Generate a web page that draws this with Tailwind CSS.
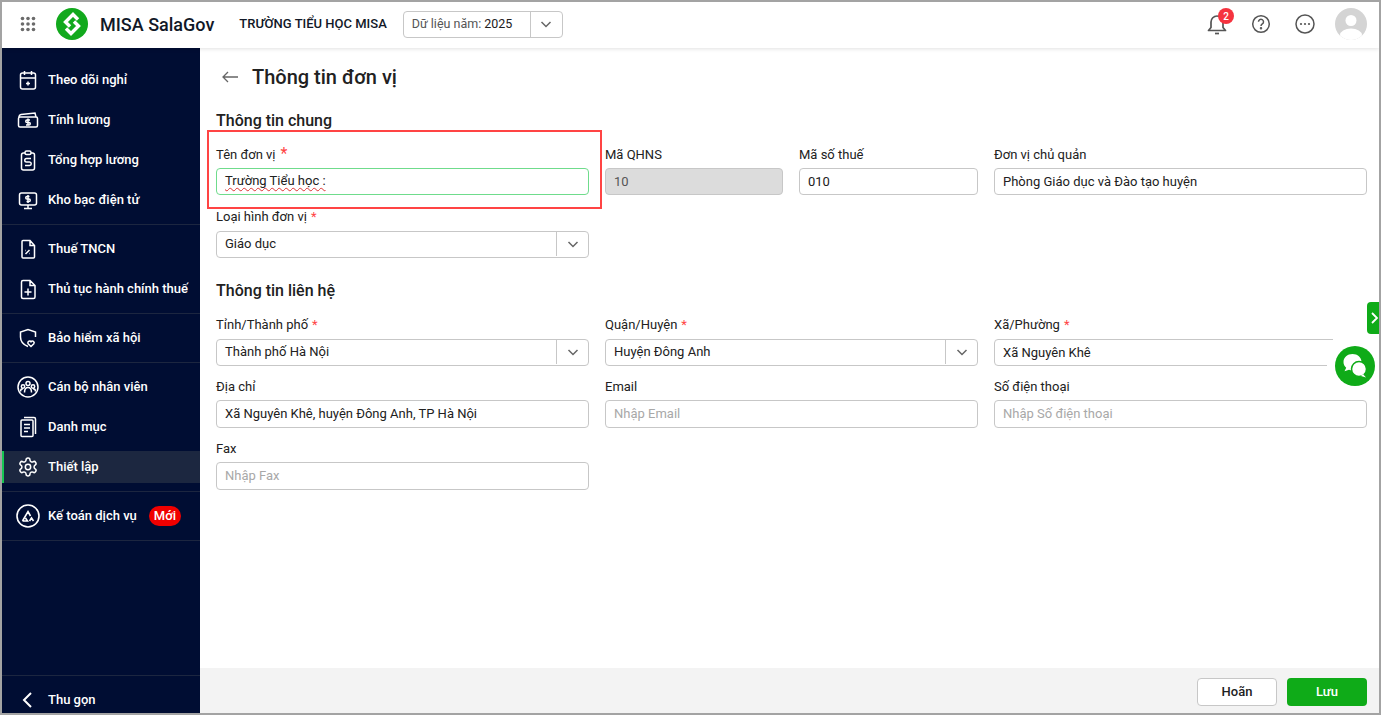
<!DOCTYPE html>
<html lang="vi">

<head>
    <meta charset="UTF-8" />
    <title>Thông tin đơn vị</title>
    <script src="https://cdn.jsdelivr.net/npm/@tailwindcss/browser@4"></script>
</head>

<body class="bg-white font-['Roboto',sans-serif] text-[13px] text-[#212121]">
    <div class="relative flex h-[715px] w-[1381px] flex-col overflow-hidden border-2 border-[#a3a3a3]">

        <!-- Top bar -->
        <header class="relative z-10 flex h-[46px] shrink-0 items-center bg-white pb-[2px] shadow-[0_1px_4px_rgba(0,0,0,0.12)]">
            <svg class="ml-[18px] h-4 w-4 text-[#6b6b6b]" viewBox="0 0 16 16" fill="currentColor">
                <circle cx="2.5" cy="2.5" r="1.8" /><circle cx="8" cy="2.5" r="1.8" /><circle cx="13.5" cy="2.5" r="1.8" />
                <circle cx="2.5" cy="8" r="1.8" /><circle cx="8" cy="8" r="1.8" /><circle cx="13.5" cy="8" r="1.8" />
                <circle cx="2.5" cy="13.5" r="1.8" /><circle cx="8" cy="13.5" r="1.8" /><circle cx="13.5" cy="13.5" r="1.8" />
            </svg>
            <svg class="ml-[20px] h-8 w-8" viewBox="0 0 32 32">
                <circle cx="16" cy="16" r="16" fill="#12a91d" />
                <g fill="none" stroke="#fff" stroke-width="3.4">
                    <path d="M22 11.5 17 6.5 9.5 14 14 18.5" />
                    <path d="M10 20.5 15 25.5 22.5 18 18 13.5" />
                </g>
            </svg>
            <span class="ml-3 text-[18px] font-medium text-[#111827]">MISA SalaGov</span>
            <span class="ml-[25px] text-[13px] font-medium text-[#111827]">TRƯỜNG TIỂU HỌC MISA</span>
            <div class="ml-4 flex h-[27px] w-[160px] items-center rounded-[4px] border border-[#c7c7c7]">
                <span class="flex-1 pl-2 text-[12.5px] text-[#555]">Dữ liệu năm: <span class="text-[#212121]">2025</span></span>
                <span class="flex h-full w-[32px] items-center justify-center border-l border-[#c7c7c7]">
                    <svg class="h-4 w-4 text-[#666]" viewBox="0 0 16 16" fill="none" stroke="currentColor" stroke-width="1.5"><path d="m3.5 6 4.5 4.5L12.5 6" /></svg>
                </span>
            </div>

            <div class="ml-auto flex items-center">
                <div class="relative">
                    <svg class="h-6 w-6 text-[#555]" viewBox="0 0 24 24" fill="none" stroke="currentColor" stroke-width="1.7">
                        <path d="M3.5 18.5h17l-2.500-3V10a6 6 0 0 0-12 0v5.500z" stroke-linejoin="round" />
                        <path d="M10 21.5h4" />
                    </svg>
                    <span class="absolute -top-[4px] left-[13px] flex h-4 w-4 items-center justify-center rounded-full bg-[#f5333f] text-[10px] font-medium text-white">2</span>
                </div>
                <svg class="ml-[22px] h-[20px] w-[20px] text-[#555]" viewBox="0 0 20 20" fill="none" stroke="currentColor" stroke-width="1.5">
                    <circle cx="10" cy="10" r="8.3" />
                    <path d="M7.5 7.8a2.500 2.500 0 1 1 3.800 2.100c-.9.600-1.300 1-1.300 2" />
                    <circle cx="10" cy="14.3" r=".5" fill="currentColor" />
                </svg>
                <svg class="ml-[24px] h-[20px] w-[20px] text-[#555]" viewBox="0 0 20 20" fill="none" stroke="currentColor" stroke-width="1.5">
                    <circle cx="10" cy="10" r="9" />
                    <g fill="currentColor" stroke="none"><circle cx="6" cy="10" r="1.1" /><circle cx="10" cy="10" r="1.1" /><circle cx="14" cy="10" r="1.1" /></g>
                </svg>
                <svg class="ml-[20px] mr-[12px] h-8 w-8" viewBox="0 0 32 32">
                    <clipPath id="avatar"><circle cx="16" cy="16" r="16" /></clipPath>
                    <g clip-path="url(#avatar)">
                        <rect width="32" height="32" fill="#d4d4d4" />
                        <circle cx="16" cy="12.5" r="5.5" fill="#fff" />
                        <ellipse cx="16" cy="27" rx="11" ry="6.5" fill="#fff" />
                    </g>
                </svg>
            </div>
        </header>

        <div class="flex min-h-0 flex-1">
            <!-- Sidebar -->
            <aside class="flex w-[198px] shrink-0 flex-col bg-[#000d33] text-[13px] font-medium text-white">
                <div class="border-b border-[#1c2640] pt-[12px] pb-[4px]">
                    <a class="flex h-[40px] items-center gap-2 pl-[14px]">
                        <svg class="h-6 w-6" viewBox="0 0 24 24" fill="none" stroke="currentColor" stroke-width="1.5"><rect x="4.5" y="5" width="15" height="16" rx="2" /><path d="M4.500 10h15M8.500 3v4M15.500 3v4M12 13.500v4M10 15.500h4" /></svg>
                        Theo dõi nghỉ
                    </a>
                    <a class="flex h-[40px] items-center gap-2 pl-[14px]">
                        <svg class="h-6 w-6" viewBox="0 0 24 24" fill="none" stroke="currentColor" stroke-width="1.5"><rect x="2.5" y="9" width="19" height="10" rx="1.5" /><path d="M3 9c0-1.500 1-2.300 2-2.500L19 5l1 4M12 10.500v7M14 12h-3a1 1 0 0 0 0 2.500h2a1 1 0 0 1 0 2.500h-3" /></svg>
                        Tính lương
                    </a>
                    <a class="flex h-[40px] items-center gap-2 pl-[14px]">
                        <svg class="h-6 w-6" viewBox="0 0 24 24" fill="none" stroke="currentColor" stroke-width="1.5"><rect x="5.5" y="5" width="13" height="17" rx="2" /><rect x="9" y="3" width="6" height="3.5" rx="1.5" fill="#000d33" /><path d="M15 10.500h-4.500a1.500 1.500 0 0 0 0 3.500h3a1.500 1.500 0 0 1 0 3.500H9" /></svg>
                        Tổng hợp lương
                    </a>
                    <a class="flex h-[40px] items-center gap-2 pl-[14px]">
                        <svg class="h-6 w-6" viewBox="0 0 24 24" fill="none" stroke="currentColor" stroke-width="1.5"><rect x="3.5" y="5" width="17" height="12" rx="2" /><path d="M12 17v3.500M8 20.500h8M12 7v8M13.500 8.500H11a1 1 0 0 0 0 2.500h2a1 1 0 0 1 0 2.500h-2.500" /></svg>
                        Kho bạc điện tử
                    </a>
                </div>
                <div class="border-b border-[#1c2640] py-[4px]">
                    <a class="flex h-[40px] items-center gap-2 pl-[14px]">
                        <svg class="h-6 w-6" viewBox="0 0 24 24" fill="none" stroke="currentColor" stroke-width="1.5"><path d="M7 3.500h7l4.500 5V20a1 1 0 0 1-1 1H7a1 1 0 0 1-1-1V4.500a1 1 0 0 1 1-1zM14 3.500V8.500h4.500M9.500 17l4-4M9.500 13.500h.5M13 16.500h.5" /></svg>
                        Thuế TNCN
                    </a>
                    <a class="flex h-[40px] items-center gap-2 pl-[14px]">
                        <svg class="h-6 w-6" viewBox="0 0 24 24" fill="none" stroke="currentColor" stroke-width="1.5"><path d="M7 3.500h7l5 5V20a1.500 1.500 0 0 1-1.500 1.500H7A1.500 1.500 0 0 1 5.500 20V5A1.500 1.500 0 0 1 7 3.500zM14 3.500v5h5M12 11.500v7M8.500 15h7" /></svg>
                        Thủ tục hành chính thuế
                    </a>
                </div>
                <div class="border-b border-[#1c2640] py-[4px]">
                    <a class="flex h-[40px] items-center gap-2 pl-[14px]">
                        <svg class="h-6 w-6" viewBox="0 0 24 24" fill="none" stroke="currentColor" stroke-width="1.5"><path d="M12 20.500c-4-1.500-7.500-4.500-7.500-9.500V6l7.500-2.500L19.500 6v5M15 20.500l-2.800-2.700a1.700 1.700 0 0 1 2.800-2 1.700 1.700 0 0 1 2.800 2z" /></svg>
                        Bảo hiểm xã hội
                    </a>
                </div>
                <div class="border-b border-[#1c2640] py-[4px]">
                    <a class="flex h-[40px] items-center gap-2 pl-[14px]">
                        <svg class="h-6 w-6" viewBox="0 0 24 24" fill="none" stroke="currentColor" stroke-width="1.5"><circle cx="12" cy="12" r="10" /><circle cx="12" cy="8.500" r="2" /><circle cx="7" cy="11.500" r="1.700" /><circle cx="17" cy="11.500" r="1.700" /><path d="M8.500 17.500c0-3 1.500-5 3.500-5s3.500 2 3.500 5M4.500 16.500c0-1.500 1-2.700 2.500-2.700M19.500 16.500c0-1.500-1-2.700-2.500-2.700" /></svg>
                        Cán bộ nhân viên
                    </a>
                    <a class="flex h-[40px] items-center gap-2 pl-[14px]">
                        <svg class="h-6 w-6" viewBox="0 0 24 24" fill="none" stroke="currentColor" stroke-width="1.5"><rect x="5" y="5" width="12" height="16.5" rx="1" /><path d="M8 2.500h10a1.500 1.500 0 0 1 1.500 1.500v15M8 9.500h6M8 13h6M8 16.500h4" /></svg>
                        Danh mục
                    </a>
                    <a class="my-[4px] flex h-[32px] items-center gap-2 border-l-2 border-[#17c653] bg-[#1c2740] pl-[12px]">
                        <svg class="h-6 w-6" viewBox="-1.5 -1.5 27 27" fill="none" stroke="currentColor" stroke-width="1.7"><circle cx="12" cy="12" r="3" /><path d="M12.220 2h-.44a2 2 0 0 0-2 2v.18a2 2 0 0 1-1 1.730l-.43.250a2 2 0 0 1-2 0l-.15-.08a2 2 0 0 0-2.730.730l-.22.380a2 2 0 0 0 .730 2.730l.15.1a2 2 0 0 1 1 1.720v.51a2 2 0 0 1-1 1.740l-.15.09a2 2 0 0 0-.730 2.730l.22.380a2 2 0 0 0 2.730.730l.15-.08a2 2 0 0 1 2 0l.43.250a2 2 0 0 1 1 1.730V20a2 2 0 0 0 2 2h.44a2 2 0 0 0 2-2v-.18a2 2 0 0 1 1-1.730l.43-.250a2 2 0 0 1 2 0l.15.08a2 2 0 0 0 2.730-.730l.22-.39a2 2 0 0 0-.730-2.730l-.15-.08a2 2 0 0 1-1-1.740v-.5a2 2 0 0 1 1-1.740l.15-.09a2 2 0 0 0 .730-2.730l-.22-.380a2 2 0 0 0-2.730-.730l-.15.08a2 2 0 0 1-2 0l-.43-.250a2 2 0 0 1-1-1.730V4a2 2 0 0 0-2-2z" /></svg>
                        Thiết lập
                    </a>
                </div>
                <div class="border-b border-[#1c2640] py-[4px]">
                    <a class="flex h-[40px] items-center gap-2 pl-[14px]">
                        <svg class="h-6 w-6" viewBox="0 0 24 24" fill="none" stroke="currentColor" stroke-width="1.6"><circle cx="12" cy="12" r="11" /><path d="M6.500 17h5L9.500 14M6.500 17 12 7.500l2.500 4.500M13.500 17l2-3 2 3" /></svg>
                        Kế toán dịch vụ
                        <span class="ml-[4px] flex h-[20px] items-center rounded-full bg-[#f00000] px-[5px] text-[13px] font-medium">Mới</span>
                    </a>
                </div>
                <div class="mt-auto flex h-[38px] items-center gap-2 border-t border-[#1c2640] pt-[10px] pl-[14px]">
                    <svg class="h-6 w-6" viewBox="0 0 24 24" fill="none" stroke="currentColor" stroke-width="2"><path d="m15 5-7 7 7 7" /></svg>
                    Thu gọn
                </div>
            </aside>

            <!-- Content -->
            <main class="flex min-w-0 flex-1 flex-col">
                <div class="flex-1 pt-[12px] pr-[12px] pl-[16px]">
                    <div class="flex h-[34px] items-center">
                        <svg class="ml-[5px] h-[18px] w-[18px] text-[#666]" viewBox="0 0 18 18" fill="none" stroke="currentColor" stroke-width="1.3"><path d="M17 9H2M7 4 2 9l5 5" /></svg>
                        <h1 class="ml-[13px] text-[20px] font-medium text-[#212121]">Thông tin đơn vị</h1>
                    </div>

                    <h2 class="mt-[17px] h-[20px] text-[16px] leading-[20px] font-medium">Thông tin chung</h2>
                    <div class="mt-4 grid grid-cols-3 gap-x-4 gap-y-[14px]">
                        <div>
                            <label class="flex h-[16px] items-center">Tên đơn vị <span class="ml-[5px] -translate-y-[1px] text-[16px] text-[#f44]">*</span></label>
                            <div class="mt-[5px] flex h-[27px] items-center rounded-[4px] border border-[#6fdc8c] px-2 pb-px">
                                <span class="underline decoration-[#d33] decoration-wavy decoration-1 underline-offset-2">Trường Tiểu học :</span>
                            </div>
                        </div>
                        <div class="grid grid-cols-[178px_179px] gap-x-4">
                            <div>
                                <label class="flex h-[16px] items-center">Mã QHNS</label>
                                <input class="mt-[5px] h-[27px] w-full rounded-[4px] border border-[#c7c7c7] bg-[#dcdcdc] px-2 pb-px text-[#555]" value="10" disabled />
                            </div>
                            <div>
                                <label class="flex h-[16px] items-center">Mã số thuế</label>
                                <input class="mt-[5px] h-[27px] w-full rounded-[4px] border border-[#c7c7c7] px-2 pb-px" value="010" />
                            </div>
                        </div>
                        <div>
                            <label class="flex h-[16px] items-center">Đơn vị chủ quản</label>
                            <input class="mt-[5px] h-[27px] w-full rounded-[4px] border border-[#c7c7c7] px-2 pb-px" value="Phòng Giáo dục và Đào tạo huyện" />
                        </div>
                        <div>
                            <label class="flex h-[16px] items-center">Loại hình đơn vị <span class="ml-1 text-[#f44]">*</span></label>
                            <div class="mt-[6px] flex h-[27px] items-center rounded-[4px] border border-[#c7c7c7] pb-px">
                                <span class="flex-1 px-2">Giáo dục</span>
                                <span class="flex h-full w-[32px] items-center justify-center border-l border-[#c7c7c7]">
                                    <svg class="h-4 w-4 text-[#666]" viewBox="0 0 16 16" fill="none" stroke="currentColor" stroke-width="1.5"><path d="m3.5 6 4.5 4.5L12.5 6" /></svg>
                                </span>
                            </div>
                        </div>
                    </div>

                    <h2 class="mt-[23px] h-[20px] text-[16px] leading-[20px] font-medium">Thông tin liên hệ</h2>
                    <div class="mt-4 grid grid-cols-3 gap-x-4 gap-y-[13px]">
                        <div>
                            <label class="flex h-[16px] items-center">Tỉnh/Thành phố <span class="ml-1 text-[#f44]">*</span></label>
                            <div class="mt-[6px] flex h-[27px] items-center rounded-[4px] border border-[#c7c7c7] pb-px">
                                <span class="flex-1 px-2">Thành phố Hà Nội</span>
                                <span class="flex h-full w-[32px] items-center justify-center border-l border-[#c7c7c7]">
                                    <svg class="h-4 w-4 text-[#666]" viewBox="0 0 16 16" fill="none" stroke="currentColor" stroke-width="1.5"><path d="m3.5 6 4.5 4.5L12.5 6" /></svg>
                                </span>
                            </div>
                        </div>
                        <div>
                            <label class="flex h-[16px] items-center">Quận/Huyện <span class="ml-1 text-[#f44]">*</span></label>
                            <div class="mt-[6px] flex h-[27px] items-center rounded-[4px] border border-[#c7c7c7] pb-px">
                                <span class="flex-1 px-2">Huyện Đông Anh</span>
                                <span class="flex h-full w-[32px] items-center justify-center border-l border-[#c7c7c7]">
                                    <svg class="h-4 w-4 text-[#666]" viewBox="0 0 16 16" fill="none" stroke="currentColor" stroke-width="1.5"><path d="m3.5 6 4.5 4.5L12.5 6" /></svg>
                                </span>
                            </div>
                        </div>
                        <div>
                            <label class="flex h-[16px] items-center">Xã/Phường <span class="ml-1 text-[#f44]">*</span></label>
                            <input class="mt-[6px] h-[27px] w-full rounded-[4px] border border-[#c7c7c7] px-2 pb-px" value="Xã Nguyên Khê" />
                        </div>
                        <div>
                            <label class="flex h-[16px] items-center">Địa chỉ</label>
                            <input class="mt-[5px] h-[28px] w-full rounded-[4px] border border-[#c7c7c7] px-2 pb-px" value="Xã Nguyên Khê, huyện Đông Anh, TP Hà Nội" />
                        </div>
                        <div>
                            <label class="flex h-[16px] items-center">Email</label>
                            <input class="mt-[5px] h-[28px] w-full rounded-[4px] border border-[#c7c7c7] px-2 pb-px placeholder:text-[#a8a8a8]" placeholder="Nhập Email" />
                        </div>
                        <div>
                            <label class="flex h-[16px] items-center">Số điện thoại</label>
                            <input class="mt-[5px] h-[28px] w-full rounded-[4px] border border-[#c7c7c7] px-2 pb-px placeholder:text-[#a8a8a8]" placeholder="Nhập Số điện thoại" />
                        </div>
                        <div>
                            <label class="flex h-[16px] items-center">Fax</label>
                            <input class="mt-[5px] h-[28px] w-full rounded-[4px] border border-[#c7c7c7] px-2 pb-px placeholder:text-[#a8a8a8]" placeholder="Nhập Fax" />
                        </div>
                    </div>
                </div>

                <footer class="flex h-[45px] shrink-0 justify-end gap-[10px] bg-[#f3f3f3] pt-[10px] pr-[12px]">
                    <button class="h-[28px] w-[80px] rounded-[4px] border border-[#c7c7c7] bg-white font-medium">Hoãn</button>
                    <button class="h-[28px] w-[80px] rounded-[4px] bg-[#0fab18] font-medium text-white">Lưu</button>
                </footer>
            </main>
        </div>

        <!-- Annotation and floating widgets -->
        <div class="absolute top-[128px] left-[205px] h-[79px] w-[395px] border-2 border-[#f44]"></div>
        <div class="absolute top-[333px] left-[1331px] h-[62px] w-[46px] bg-white"></div>
        <div class="absolute top-[360px] left-[1325px] h-[10px] w-[10px] bg-white"></div>
        <div class="absolute top-[300px] right-0 flex h-[32px] w-[12px] items-center justify-end rounded-l-[4px] bg-[#0fab18]">
            <svg class="h-4 w-[9px] text-white" viewBox="0 0 9 16" fill="none" stroke="currentColor" stroke-width="1.8"><path d="m2 3 5 5-5 5" /></svg>
        </div>
        <div class="absolute top-[344px] left-[1333px] flex h-10 w-10 items-center justify-center rounded-full bg-[#0fab18]">
            <svg class="h-10 w-10" viewBox="0 0 40 40">
                <path d="M17.5 8c-5 0-9 3.400-9 8 0 2.300 1 4.300 2.700 5.800l-1.700 3.500 4.500-1.500c1.100.4 2.300.6 3.500.6 5 0 9-3.700 9-8.400S22.500 8 17.500 8z" fill="#fff" />
                <circle cx="24" cy="23" r="7.5" fill="#fff" stroke="#0fab18" stroke-width="1.5" />
                <path d="m28 28 3 3.500-5-1.500z" fill="#fff" />
            </svg>
        </div>
    </div>
</body>

</html>
